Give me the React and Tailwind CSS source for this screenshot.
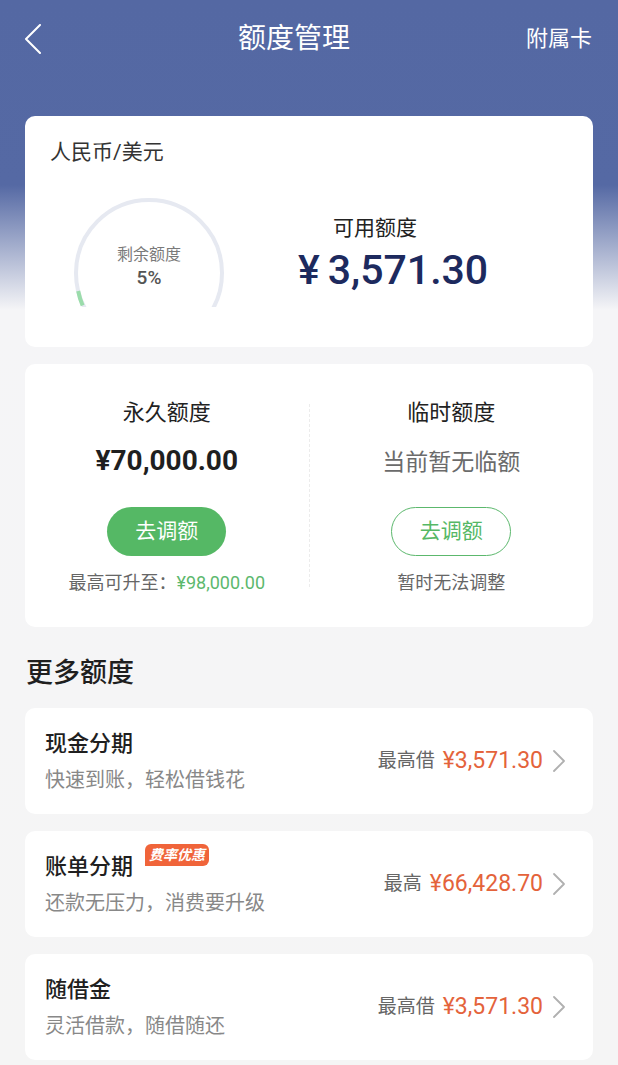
const font = { fontFamily: 'Roboto, "Noto Sans CJK SC", sans-serif' }

const products = [
  { title: '现金分期', sub: '快速到账，轻松借钱花', label: '最高借', amount: '¥3,571.30' },
  { title: '账单分期', sub: '还款无压力，消费要升级', label: '最高', amount: '¥66,428.70', badge: '费率优惠' },
  { title: '随借金', sub: '灵活借款，随借随还', label: '最高借', amount: '¥3,571.30' },
]

function Gauge() {
  // ring clipped at the bottom, 5% green at the left end
  return (
    <div className="relative w-[160px] h-[112px] flex flex-col items-center pt-[49px]">
      <svg className="absolute left-0 top-0" width="160" height="112" viewBox="0 0 160 112">
        <circle cx="80" cy="78" r="73" fill="none" stroke="#e6e9f1" strokeWidth="4" />
        <path d="M 13.6 110.5 A 73 73 0 0 1 9.2 96" fill="none" stroke="#9bdcab" strokeWidth="4" />
      </svg>
      <span className="relative text-[16px] leading-[22px] text-[#7a7a7a]">剩余额度</span>
      <span className="relative text-[19px] leading-[24px] font-medium text-[#555]">5%</span>
    </div>
  )
}

function Chevron({ className }) {
  return (
    <svg className={className} width="15" height="24" viewBox="0 0 15 24" fill="none">
      <path d="M2 2 L12 12 L2 22" stroke="#b0b0b0" strokeWidth="1.8" strokeLinecap="round" strokeLinejoin="round" />
    </svg>
  )
}

export default function App() {
  return (
    <div
      style={font}
      className="min-h-[1065px] bg-[#f5f5f5] bg-[image:linear-gradient(180deg,#5468a3_0px,#5569a4_185px,#f5f5f7_310px,#f5f5f5_100%)] pb-[4px]"
    >
      {/* nav */}
      <div className="h-[78px] flex items-center text-white">
        <svg className="ml-[24px]" width="18" height="30" viewBox="0 0 18 30" fill="none">
          <path d="M16 1 L2 15 L16 29" stroke="white" strokeWidth="2" strokeLinecap="round" strokeLinejoin="round" />
        </svg>
        <h1 className="ml-[196px] text-[28px] leading-[36px]">额度管理</h1>
        <span className="ml-auto mr-[26px] text-[22px] leading-[30px]">附属卡</span>
      </div>

      <div className="px-[25px] pt-[38px]">
        {/* available */}
        <div className="bg-white rounded-[10px] pt-[22px] pb-[40px] px-[25px]">
          <p className="text-[21px] leading-[28px] text-[#333]">人民币/美元</p>
          <div className="mt-[29px] flex items-start">
            <div className="ml-[19px]">
              <Gauge />
            </div>
            <div className="ml-[69px] mt-[19px] flex flex-col">
              <span className="ml-[35px] text-[21px] leading-[28px] text-[#222]">可用额度</span>
              <span className="mt-[4px] text-[41px] leading-[48px] font-medium text-[#1d2a5e]">¥<span className="ml-[8px]">3,571.30</span></span>
            </div>
          </div>
        </div>

        {/* permanent / temporary */}
        <div className="mt-[17px] bg-white rounded-[10px] flex">
          <div className="flex-1 flex flex-col items-center pt-[34px] pb-[33px]">
            <span className="text-[22px] leading-[30px] text-[#222]">永久额度</span>
            <span className="mt-[16px] text-[28px] leading-[34px] font-bold text-[#1f1f1f]">¥70,000.00</span>
            <button className="mt-[29px] w-[119px] h-[49px] rounded-full bg-[#55b865] text-white text-[21px]">去调额</button>
            <span className="mt-[16px] text-[18px] leading-[22px] text-[#666]">
              最高可升至：<span className="text-[#5cb86d]">¥98,000.00</span>
            </span>
          </div>
          <div className="my-[40px] w-0 border-l border-dashed border-[#ececec]" />
          <div className="flex-1 flex flex-col items-center pt-[34px] pb-[33px]">
            <span className="text-[22px] leading-[30px] text-[#222]">临时额度</span>
            <span className="mt-[20px] text-[23px] leading-[30px] text-[#6b6b6b]">当前暂无临额</span>
            <button className="mt-[29px] w-[120px] h-[49px] rounded-full border-[1.5px] border-[#5cb86d] text-[#55b865] text-[21px]">去调额</button>
            <span className="mt-[16px] text-[18px] leading-[22px] text-[#666]">暂时无法调整</span>
          </div>
        </div>

        <h2 className="mt-[28px] ml-[1px] text-[27px] leading-[36px] font-medium text-[#1f1f1f]">更多额度</h2>

        <div className="mt-[17px] flex flex-col gap-[17px]">
          {products.map(p => (
            <div key={p.title} className="h-[106px] bg-white rounded-[10px] flex items-center pl-[20px] pr-[26px]">
              <div className="flex flex-col">
                <div className="flex items-start">
                  <span className="text-[22px] leading-[28px] font-medium text-[#1f1f1f]">{p.title}</span>
                  {p.badge && (
                    <span className="ml-[12px] -mt-[9px] px-[4px] h-[22px] leading-[22px] rounded-[6px] rounded-bl-none bg-[#f0643a] text-white text-[14px] font-bold italic">
                      {p.badge}
                    </span>
                  )}
                </div>
                <span className="mt-[9px] text-[20px] leading-[26px] text-[#888]">{p.sub}</span>
              </div>
              <div className="ml-auto flex items-center">
                <span className="text-[19px] text-[#666]">{p.label}</span>
                <span className="ml-[8px] text-[23px] text-[#e4633b]">{p.amount}</span>
                <Chevron className="ml-[9px]" />
              </div>
            </div>
          ))}
        </div>
      </div>
    </div>
  )
}
